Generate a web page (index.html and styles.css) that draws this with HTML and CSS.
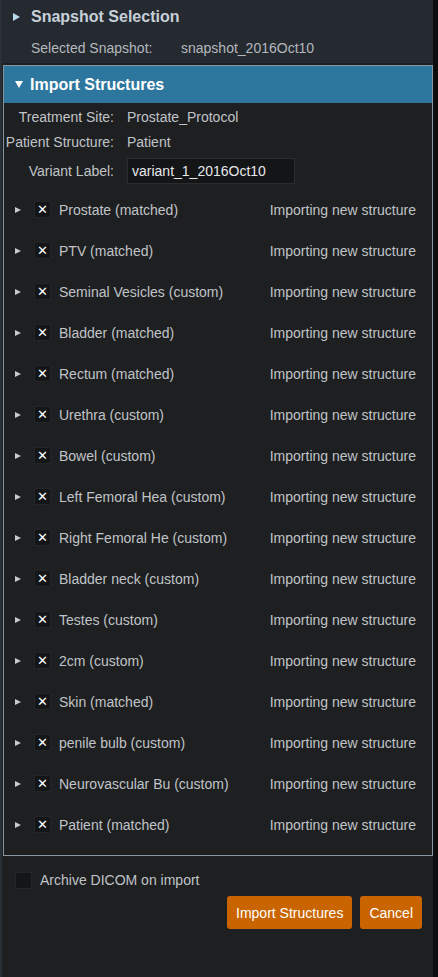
FILE: index.html
```html
<!DOCTYPE html>
<html>
<head>
<meta charset="utf-8">
<link rel="stylesheet" href="styles.css">
</head>
<body>
<div class="app">
  <div class="main">
    <section class="snapshot">
      <div class="snap-head"><span class="tri tri-right light"></span><span class="snap-title">Snapshot Selection</span></div>
      <div class="snap-row"><span class="snap-label">Selected Snapshot:</span><span>snapshot_2016Oct10</span></div>
    </section>
    <section class="import">
      <div class="import-head"><span class="tri tri-down white"></span><span class="import-title">Import Structures</span></div>
      <div class="import-body">
        <div class="fields">
          <div class="field"><span class="flabel">Treatment Site:</span><span>Prostate_Protocol</span></div>
          <div class="field"><span class="flabel">Patient Structure:</span><span>Patient</span></div>
          <div class="field field-input"><span class="flabel">Variant Label:</span><span class="input">variant_1_2016Oct10</span></div>
        </div>
        <div class="structs">
          <div class="srow"><span class="tri tri-right small"></span><span class="cbox">✕</span><span class="sname">Prostate (matched)</span><span class="sstat">Importing new structure</span></div>
          <div class="srow"><span class="tri tri-right small"></span><span class="cbox">✕</span><span class="sname">PTV (matched)</span><span class="sstat">Importing new structure</span></div>
          <div class="srow"><span class="tri tri-right small"></span><span class="cbox">✕</span><span class="sname">Seminal Vesicles (custom)</span><span class="sstat">Importing new structure</span></div>
          <div class="srow"><span class="tri tri-right small"></span><span class="cbox">✕</span><span class="sname">Bladder (matched)</span><span class="sstat">Importing new structure</span></div>
          <div class="srow"><span class="tri tri-right small"></span><span class="cbox">✕</span><span class="sname">Rectum (matched)</span><span class="sstat">Importing new structure</span></div>
          <div class="srow"><span class="tri tri-right small"></span><span class="cbox">✕</span><span class="sname">Urethra (custom)</span><span class="sstat">Importing new structure</span></div>
          <div class="srow"><span class="tri tri-right small"></span><span class="cbox">✕</span><span class="sname">Bowel (custom)</span><span class="sstat">Importing new structure</span></div>
          <div class="srow"><span class="tri tri-right small"></span><span class="cbox">✕</span><span class="sname">Left Femoral Hea (custom)</span><span class="sstat">Importing new structure</span></div>
          <div class="srow"><span class="tri tri-right small"></span><span class="cbox">✕</span><span class="sname">Right Femoral He (custom)</span><span class="sstat">Importing new structure</span></div>
          <div class="srow"><span class="tri tri-right small"></span><span class="cbox">✕</span><span class="sname">Bladder neck (custom)</span><span class="sstat">Importing new structure</span></div>
          <div class="srow"><span class="tri tri-right small"></span><span class="cbox">✕</span><span class="sname">Testes (custom)</span><span class="sstat">Importing new structure</span></div>
          <div class="srow"><span class="tri tri-right small"></span><span class="cbox">✕</span><span class="sname">2cm (custom)</span><span class="sstat">Importing new structure</span></div>
          <div class="srow"><span class="tri tri-right small"></span><span class="cbox">✕</span><span class="sname">Skin (matched)</span><span class="sstat">Importing new structure</span></div>
          <div class="srow"><span class="tri tri-right small"></span><span class="cbox">✕</span><span class="sname">penile bulb (custom)</span><span class="sstat">Importing new structure</span></div>
          <div class="srow"><span class="tri tri-right small"></span><span class="cbox">✕</span><span class="sname">Neurovascular Bu (custom)</span><span class="sstat">Importing new structure</span></div>
          <div class="srow"><span class="tri tri-right small"></span><span class="cbox">✕</span><span class="sname">Patient (matched)</span><span class="sstat">Importing new structure</span></div>
        </div>
      </div>
    </section>
    <div class="footer">
      <div class="archive"><span class="cbox empty"></span><span>Archive DICOM on import</span></div>
      <div class="buttons"><button class="btn">Import Structures</button><button class="btn">Cancel</button></div>
    </div>
  </div>
  <div class="strip"></div>
</div>
</body>
</html>
```
FILE: styles.css
```css
* { box-sizing: border-box; }
html, body { margin: 0; padding: 0; }
body {
  background: #1e1f21;
  font-family: "Liberation Sans", Arial, sans-serif;
  font-size: 14px;
  color: #c0c4c8;
}
.app { display: flex; width: 438px; height: 977px; }
.main {
  width: 433px;
  background: #1e1f21;
  border-left: 2px solid #293038;
  display: flex;
  flex-direction: column;
}
.strip { width: 5px; background: #0c0d0f; }

.tri { display: inline-block; width: 0; height: 0; }
.tri-right { border-top: 4px solid transparent; border-bottom: 4px solid transparent; border-left: 7px solid #c8d2da; }
.tri-right.light { border-left-color: #b8d8ee; }
.tri-right.small { border-top-width: 3.5px; border-bottom-width: 3.5px; border-left-width: 6px; border-left-color: #c8cbce; }
.tri-down { border-left: 4px solid transparent; border-right: 4px solid transparent; border-top: 7px solid #fff; }

.snapshot {
  background: #252a31;
  height: 64px;
  border-bottom: 1px solid #1b1e22;
}
.snap-head {
  height: 34px;
  display: flex;
  align-items: center;
  padding-left: 11px;
  gap: 11px;
}
.snap-title { font-weight: bold; font-size: 16px; color: #c6d0d8; }
.snap-row {
  display: flex;
  align-items: center;
  height: 28px;
  padding-left: 29px;
  color: #b4b8bc;
}
.snap-label { width: 150px; }

.import {
  margin: 1px 0 0 1px;
  width: 430px;
  border: 1px solid #8696a2;
  display: flex;
  flex-direction: column;
}
.import-head {
  height: 37px;
  background: #2d769d;
  display: flex;
  align-items: center;
  padding-left: 11px;
  gap: 7px;
}
.import-title { font-weight: bold; font-size: 16px; color: #fff; }
.import-body { padding: 1px 0 10px; }
.fields { display: flex; flex-direction: column; }
.field {
  display: flex;
  align-items: center;
  height: 25px;
  gap: 13px;
}
.flabel { width: 110px; text-align: right; }
.field-input { height: 34px; }
.input {
  width: 168px;
  height: 26px;
  background: #141517;
  border: 1px solid #2a2c2f;
  color: #e6e8ea;
  display: flex;
  align-items: center;
  padding-left: 4px;
}
.structs { display: flex; flex-direction: column; margin-top: 1px; }
.srow {
  height: 41px;
  display: flex;
  align-items: center;
  padding-left: 11px;
  padding-right: 16px;
}
.srow .tri { margin-right: 13px; }
.cbox {
  width: 17px;
  height: 17px;
  background: #141517;
  border: 1px solid #232527;
  color: #fff;
  font-weight: bold;
  font-size: 13px;
  display: inline-flex;
  align-items: center;
  justify-content: center;
  line-height: 1;
  font-family: "DejaVu Sans", sans-serif;
}
.sname { margin-left: 8px; flex: 1; }
.sstat { text-align: right; }

.footer { padding: 14px 11px 0 13px; display: flex; flex-direction: column; }
.archive { display: flex; align-items: center; gap: 8px; height: 20px; }
.buttons { display: flex; justify-content: flex-end; gap: 8px; margin-top: 6px; }
.btn {
  font-family: "Liberation Sans", Arial, sans-serif;
  font-size: 14px;
  color: #fff;
  background: #c96400;
  border: none;
  border-radius: 3px;
  height: 33px;
  padding: 0 9px;
}
```
